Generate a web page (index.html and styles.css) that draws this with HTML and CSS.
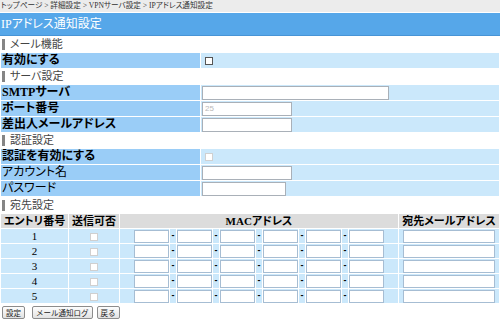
FILE: index.html
```html
<!DOCTYPE html>
<html lang="ja">
<head>
    <meta charset="UTF-8">
    <title>IPアドレス通知設定</title>
    <link rel="stylesheet" href="styles.css">
</head>
<body>

    <div class="crumb">トップページ &gt; 詳細設定 &gt; VPNサーバ設定 &gt; IPアドレス通知設定</div>
    <h1 class="title">IPアドレス通知設定</h1>

    <table class="form">
        <tr><td colspan="2" class="sec"><span>メール機能</span></td></tr>
        <tr><th>有効にする</th><td><input type="checkbox" class="chk"></td></tr>

        <tr><td colspan="2" class="sec"><span>サーバ設定</span></td></tr>
        <tr><th>SMTPサーバ</th><td><input type="text" class="txt long"></td></tr>
        <tr><th>ポート番号</th><td><input type="text" class="txt port" value="25" disabled></td></tr>
        <tr><th>差出人メールアドレス</th><td><input type="text" class="txt"></td></tr>

        <tr><td colspan="2" class="sec"><span>認証設定</span></td></tr>
        <tr><th>認証を有効にする</th><td><input type="checkbox" class="chk" disabled></td></tr>
        <tr><th class="plain">アカウント名</th><td><input type="text" class="txt"></td></tr>
        <tr><th class="plain">パスワード</th><td><input type="password" class="txt pass"></td></tr>
    </table>

    <div class="sec"><span>宛先設定</span></div>

    <table class="dest">
        <tr>
            <th class="c-num">エントリ番号</th>
            <th class="c-chk">送信可否</th>
            <th class="c-mac">MACアドレス</th>
            <th>宛先メールアドレス</th>
        </tr>
        <tr>
            <td class="num">1</td>
            <td class="center"><input type="checkbox" class="chk" disabled></td>
            <td><div class="macbox"><input type="text" class="mac"><span class="dash">-</span><input type="text" class="mac"><span class="dash">-</span><input type="text" class="mac"><span class="dash">-</span><input type="text" class="mac"><span class="dash">-</span><input type="text" class="mac"><span class="dash">-</span><input type="text" class="mac"></div></td>
            <td><input type="text" class="mail"></td>
        </tr>
        <tr>
            <td class="num">2</td>
            <td class="center"><input type="checkbox" class="chk" disabled></td>
            <td><div class="macbox"><input type="text" class="mac"><span class="dash">-</span><input type="text" class="mac"><span class="dash">-</span><input type="text" class="mac"><span class="dash">-</span><input type="text" class="mac"><span class="dash">-</span><input type="text" class="mac"><span class="dash">-</span><input type="text" class="mac"></div></td>
            <td><input type="text" class="mail"></td>
        </tr>
        <tr>
            <td class="num">3</td>
            <td class="center"><input type="checkbox" class="chk" disabled></td>
            <td><div class="macbox"><input type="text" class="mac"><span class="dash">-</span><input type="text" class="mac"><span class="dash">-</span><input type="text" class="mac"><span class="dash">-</span><input type="text" class="mac"><span class="dash">-</span><input type="text" class="mac"><span class="dash">-</span><input type="text" class="mac"></div></td>
            <td><input type="text" class="mail"></td>
        </tr>
        <tr>
            <td class="num">4</td>
            <td class="center"><input type="checkbox" class="chk" disabled></td>
            <td><div class="macbox"><input type="text" class="mac"><span class="dash">-</span><input type="text" class="mac"><span class="dash">-</span><input type="text" class="mac"><span class="dash">-</span><input type="text" class="mac"><span class="dash">-</span><input type="text" class="mac"><span class="dash">-</span><input type="text" class="mac"></div></td>
            <td><input type="text" class="mail"></td>
        </tr>
        <tr>
            <td class="num">5</td>
            <td class="center"><input type="checkbox" class="chk" disabled></td>
            <td><div class="macbox"><input type="text" class="mac"><span class="dash">-</span><input type="text" class="mac"><span class="dash">-</span><input type="text" class="mac"><span class="dash">-</span><input type="text" class="mac"><span class="dash">-</span><input type="text" class="mac"><span class="dash">-</span><input type="text" class="mac"></div></td>
            <td><input type="text" class="mail"></td>
        </tr>
    </table>

    <div class="btns">
        <button class="btn first">設定</button>
        <button class="btn">メール通知ログ</button>
        <button class="btn">戻る</button>
    </div>

</body>
</html>
```

FILE: styles.css
```css
body {
    margin: 0;
    background-color: #fff;
    color: #000;
    font-family: "Liberation Serif", "Noto Sans CJK JP", serif;
    font-size: 12px;
    font-feature-settings: "palt";
}
.crumb {
    height: 12px;
    line-height: 12px;
    background-color: #ececec;
    color: #333;
    font-size: 7.6px;
    padding-left: 1px;
    white-space: nowrap;
}
.title {
    margin: 1px 0 0;
    height: 22px;
    line-height: 22px;
    padding-left: 1px;
    background-color: #56a7e9;
    border-bottom: 1px solid #4794d6;
    color: #fff;
    font-size: 12px;
    font-weight: normal;
}
.form,
.dest {
    width: 500px;
    border-collapse: separate;
    border-spacing: 1px;
}
.form th,
.form td {
    height: 15px;
    line-height: 15px;
    padding: 0 0 0 1px;
    vertical-align: middle;
}
.form th {
    width: 198px;
    background-color: #9acdf7;
    text-align: left;
    font-weight: bold;
    white-space: nowrap;
}
.form th.plain {
    font-weight: normal;
}
.form td {
    background-color: #cbe8fb;
}
.form td.sec,
div.sec {
    background-color: #fff;
    color: #444;
}
.sec {
    height: 15px;
    line-height: 15px;
    font-size: 11px;
}
.sec span {
    display: inline-block;
    height: 11px;
    line-height: 11px;
    border-left: 3px solid #858585;
    padding-left: 5px;
}
div.sec {
    height: 16px;
    line-height: 16px;
    padding-left: 2px;
}
.txt {
    display: block;
    box-sizing: border-box;
    width: 90px;
    height: 14px;
    margin: 0;
    padding: 0 2px;
    border: 1px solid #a9b0b8;
    background-color: #fff;
    font-family: "Liberation Sans", sans-serif;
    font-size: 8px;
}
.txt.long {
    width: 187px;
}
.txt.pass {
    width: 84px;
}
.txt.port {
    color: #b8b8b8;
}
.chk {
    -webkit-appearance: none;
    appearance: none;
    display: inline-block;
    box-sizing: border-box;
    width: 8px;
    height: 8px;
    margin: 0 0 0 3px;
    border: 1px solid #555;
    background-color: #fff;
    vertical-align: middle;
}
.chk:disabled {
    border-color: #d0d0d0;
}
.dest th,
.dest td {
    height: 14px;
    line-height: 14px;
    padding: 0;
    vertical-align: middle;
}
.dest th {
    background-color: #dcdcdc;
    font-size: 11px;
    font-weight: bold;
    text-align: center;
    white-space: nowrap;
}
.dest th.c-num {
    width: 67px;
}
.dest th.c-chk {
    width: 50px;
}
.dest th.c-mac {
    width: 278px;
}
.dest td {
    background-color: #cbe8fb;
    font-size: 11px;
}
.dest td.num,
.dest td.center {
    text-align: center;
}
.dest td.center .chk {
    margin: 0;
}
.macbox {
    display: flex;
    align-items: center;
    width: max-content;
    margin: 0 auto;
}
.mac,
.mail {
    box-sizing: border-box;
    height: 13px;
    margin: 0;
    padding: 0 2px;
    border: 1px solid #a6bdd3;
    background-color: #fff;
}
.mac {
    width: 35px;
}
.mail {
    display: block;
    width: 92px;
    margin-left: 4px;
}
.dash {
    width: 6px;
    height: 14px;
    line-height: 13px;
    border-left: 1px solid #fff;
    border-right: 1px solid #fff;
    text-align: center;
    font-family: "Liberation Sans", sans-serif;
    font-size: 9px;
    font-weight: bold;
}
.btns {
    display: flex;
    padding: 2px 0 0 2px;
}
.btn {
    height: 13px;
    margin: 0 4px 0 0;
    padding: 0 3px;
    border: 1px solid #8c8c8c;
    border-radius: 2px;
    background: linear-gradient(#fdfdfd, #e2e2e2);
    color: #222;
    font-family: "Noto Sans CJK JP", sans-serif;
    font-size: 7.5px;
    line-height: 11px;
}
.btn.first {
    margin-right: 7px;
}
```
